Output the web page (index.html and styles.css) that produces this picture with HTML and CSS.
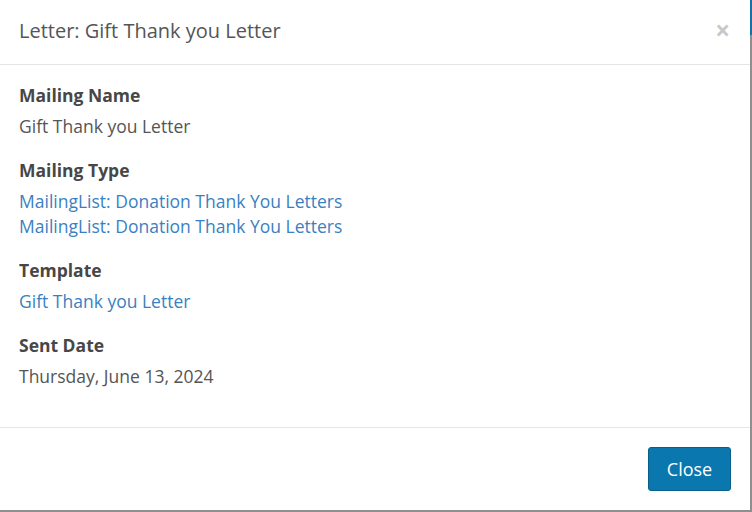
FILE: index.html
```html
<!DOCTYPE html>
<html>
	<head>
		<meta charset="UTF-8">
		<title>Letter: Gift Thank you Letter</title>
		<link rel="stylesheet" href="styles.css">
	</head>
	<body>
		<div class="modal">
			<div class="modal-header">
				<h4 class="modal-title">Letter: Gift Thank you Letter</h4>
				<span class="close">&times;</span>
			</div>
			<div class="modal-body">
				<div class="field">
					<div class="label">Mailing Name</div>
					<div class="value">Gift Thank you Letter</div>
				</div>
				<div class="field">
					<div class="label">Mailing Type</div>
					<a class="value link" href="#">MailingList: Donation Thank You Letters</a>
					<a class="value link" href="#">MailingList: Donation Thank You Letters</a>
				</div>
				<div class="field">
					<div class="label">Template</div>
					<a class="value link" href="#">Gift Thank you Letter</a>
				</div>
				<div class="field">
					<div class="label">Sent Date</div>
					<div class="value">Thursday, June 13, 2024</div>
				</div>
			</div>
			<div class="modal-footer">
				<button class="btn">Close</button>
			</div>
		</div>
	</body>
</html>
```

FILE: styles.css
```css
*{
	margin:0;
	padding:0;
	box-sizing:border-box;
}
body{
	width:752px;
	height:512px;
	overflow:hidden;
	font-family:"Open Sans","Noto Sans",sans-serif;
	font-size:17.5px;
	color:#555;
	background:linear-gradient(#17739f 0,#17739f 35px,#8f8f8f 35px);
}
.modal{
	width:750px;
	height:510px;
	background:#fff;
	display:flex;
	flex-direction:column;
}
.modal-header{
	display:flex;
	align-items:center;
	justify-content:space-between;
	height:65px;
	padding:0 20px 3px 19px;
	border-bottom:1px solid #e5e5e5;
}
.modal-title{
	font-size:20px;
	font-weight:normal;
	color:#555;
	line-height:25px;
}
.close{
	font-size:26px;
	font-weight:bold;
	color:#c8c8c8;
	line-height:20px;
	margin-top:-2px;
	cursor:pointer;
}
.modal-body{
	flex:1;
	padding:18px 19px 0;
}
.field{
	margin-bottom:19px;
}
.label{
	font-weight:bold;
	color:#474747;
	line-height:25px;
	margin-bottom:6px;
}
.value{
	display:block;
	line-height:25px;
	color:#555;
}
.link{
	color:#3a7fc1;
	text-decoration:none;
}
.modal-footer{
	display:flex;
	justify-content:flex-end;
	padding:19px 19px 19px;
	border-top:1px solid #e5e5e5;
}
.btn{
	width:83px;
	height:44px;
	font-family:inherit;
	font-size:18px;
	color:#fff;
	background:#0a77ae;
	border:1px solid #0a5f8a;
	border-radius:3px;
	cursor:pointer;
}
```
